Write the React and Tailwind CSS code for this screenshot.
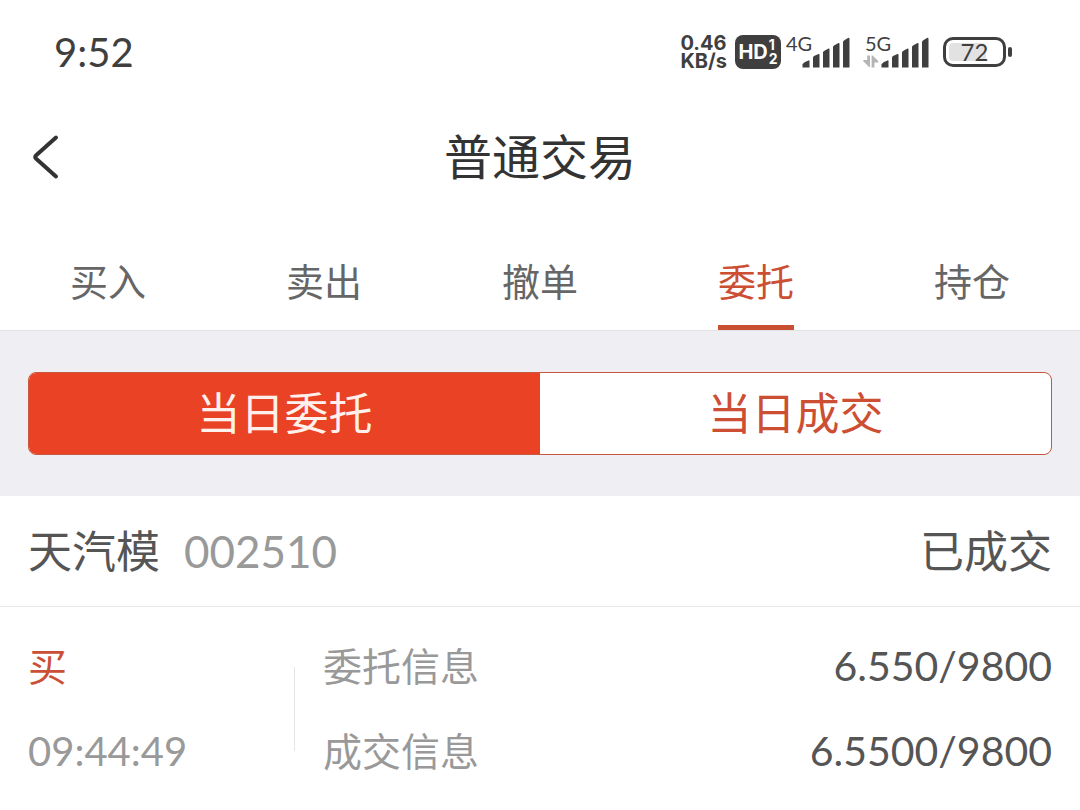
import React, { useState } from 'react';

const TABS = ['买入', '卖出', '撤单', '委托', '持仓'];
const SEGMENTS = ['当日委托', '当日成交'];

const ORDERS = [
    {
        name: '天汽模',
        code: '002510',
        status: '已成交',
        side: '买',
        time: '09:44:49',
        entrust: '6.550/9800',
        deal: '6.5500/9800',
    },
];

const Signal = ({ label, active }) => (
    <div className="relative h-[34px] w-[66px]">
        <svg className="h-full w-full" viewBox="0 0 66 34" fill="#3f3f3f" aria-hidden="true">
            <path d="M18.5 32.5V29.5Q19 28 21 27L24.5 25.4Q25.5 25 25.5 26V32.5Z" />
            <path d="M29 32.5V22.5Q29 21.5 30 21L34.5 19Q35.5 18.6 35.5 20V32.5Z" />
            <path d="M39 32.5V17.5Q39 16.5 40 16L44.5 13.6Q45.5 13.2 45.5 14.6V32.5Z" />
            <path d="M49 32.5V12Q49 11 50 10.4L54.5 8Q55.5 7.6 55.5 9V32.5Z" />
            <path d="M59 32.5V7Q59 6 60 5.4L63.5 3.2Q65.5 2 65.5 4V32.5Z" />
            {active && (
                <g fill="#b5b5b5">
                    <path d="M4.2 20.5H7V32H6L0.3 26.2V25H4.2Z" />
                    <path d="M8.6 32.5V20.5H9.6L15.2 26V27.4H11.4V32.5Z" />
                </g>
            )}
        </svg>
        <span className="absolute -top-1 left-[2px] text-[20px] leading-6">{label}</span>
    </div>
);

const StatusBar = () => (
    <div className="flex h-[104px] items-center justify-between pl-[54px] pr-[68px] text-[#3f3f3f]">
        <time className="text-[40px] leading-[50px]">9:52</time>
        <div className="flex items-center">
            <div className="mr-2 font-['Inter',sans-serif] text-[20px] font-bold leading-[18px]">
                <div>0.46</div>
                <div>KB/s</div>
            </div>
            <div className="mr-[3px] flex h-[34px] w-[46px] items-center justify-center gap-px rounded-lg bg-[#3f3f3f] font-['Inter',sans-serif] font-bold text-white">
                <span className="text-[20px] leading-6">HD</span>
                <span className="text-[14px] leading-[14px]">
                    <span className="block">1</span>
                    <span className="block">2</span>
                </span>
            </div>
            <Signal label="4G" />
            <div className="ml-[13px] mr-[14px]">
                <Signal label="5G" active />
            </div>
            <div className="flex items-center gap-[2px]">
                <div className="flex h-[30px] w-[63px] rounded-[10px] border-3 border-[#3f3f3f] p-[3px]">
                    <div className="w-[72%] rounded-[4px] bg-[#e2e2e2]">
                        <div className="w-[51px] text-center text-[24px] leading-[18px]">72</div>
                    </div>
                </div>
                <div className="h-[10px] w-1 rounded-full bg-[#3f3f3f]"></div>
            </div>
        </div>
    </div>
);

const OrderCard = ({ order }) => (
    <article className="bg-white text-[#555]">
        <div className="flex h-[111px] items-center justify-between border-b border-[#e8e8e8] px-7 text-[44px] leading-[50px]">
            <h2 className="flex gap-6">
                {order.name}
                <span className="text-[#999]">{order.code}</span>
            </h2>
            <span>{order.status}</span>
        </div>
        <div className="flex items-center px-7 py-[34px] text-[39px] leading-[50px] text-[#999]">
            <div className="flex w-[266px] shrink-0 flex-col gap-[35px]">
                <span className="text-[#c94f36]">{order.side}</span>
                <time className="text-[40px]">{order.time}</time>
            </div>
            <div className="h-[84px] w-px bg-[#e5e5e5]"></div>
            <dl className="flex flex-1 flex-col gap-[35px] pl-7">
                <div className="flex justify-between">
                    <dt>委托信息</dt>
                    <dd className="text-[41px] text-[#555]">{order.entrust}</dd>
                </div>
                <div className="flex justify-between">
                    <dt>成交信息</dt>
                    <dd className="text-[41px] text-[#555]">{order.deal}</dd>
                </div>
            </dl>
        </div>
    </article>
);

const App = () => {
    const [tab, setTab] = useState('委托');
    const [segment, setSegment] = useState('当日委托');

    return (
        <div className="min-h-screen bg-white font-['Lato','Noto_Sans_CJK_SC',sans-serif]">
            <StatusBar />

            <header className="grid h-[105px] grid-cols-[1fr_auto_1fr] items-center px-7 text-[#333]">
                <button aria-label="返回" className="h-12 w-9">
                    <svg className="h-12 w-9" viewBox="0 0 36 48" fill="none" stroke="currentColor" strokeWidth="4" strokeLinecap="round" strokeLinejoin="round">
                        <path d="M28 4.5L8.2 22.2Q6.2 24 8.2 25.8L28 43.5" />
                    </svg>
                </button>
                <h1 className="text-[48px] leading-[60px]">普通交易</h1>
            </header>

            <nav className="grid h-[122px] grid-cols-5 border-b border-[#e2e2e5]">
                {TABS.map((t) => (
                    <button
                        key={t}
                        onClick={() => setTab(t)}
                        className={`flex flex-col items-center justify-end text-[38px] leading-[50px] ${t === tab ? 'text-[#cc4e33]' : 'text-[#666]'}`}
                    >
                        {t}
                        <span className={`mt-[19px] h-[5px] w-[76px] ${t === tab ? 'bg-[#c94f33]' : 'bg-transparent'}`}></span>
                    </button>
                ))}
            </nav>

            <div className="bg-[#efeef3] px-7 py-[41px]">
                <div className="grid h-[83px] grid-cols-2 overflow-hidden rounded-lg border border-[#c9573f] bg-white">
                    {SEGMENTS.map((s) => (
                        <button
                            key={s}
                            onClick={() => setSegment(s)}
                            className={`pb-[2px] text-[44px] leading-[50px] ${s === segment ? 'bg-[#e94224] text-[#fff0ec]' : 'text-[#cc4e33]'}`}
                        >
                            {s}
                        </button>
                    ))}
                </div>
            </div>

            {ORDERS.map((o) => (
                <OrderCard key={o.code + o.time} order={o} />
            ))}
        </div>
    );
};

export default App;
